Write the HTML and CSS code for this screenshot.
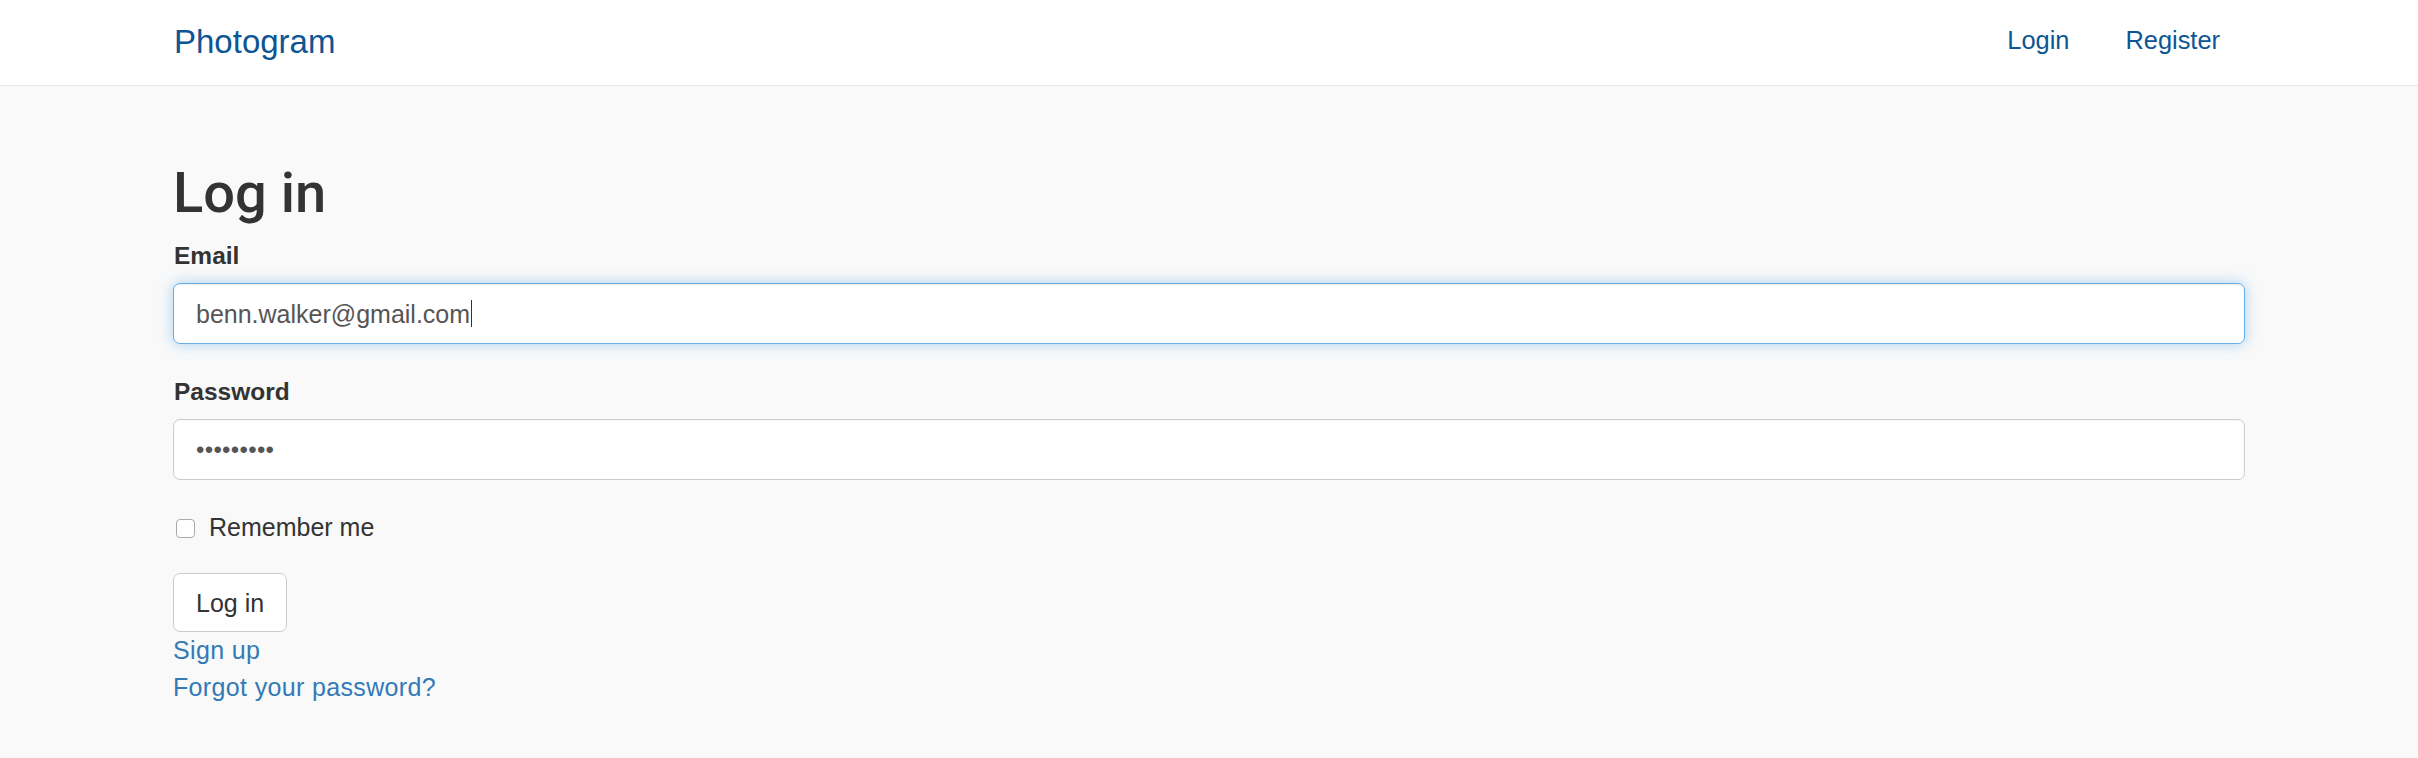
FILE: index.html
```html
<!DOCTYPE html>
<html lang="en">
<head>
<meta charset="utf-8">
<title>Photogram</title>
<link rel="stylesheet" href="styles.css">
</head>
<body>
<header class="navbar">
  <div class="container navbar-inner">
    <a class="brand" href="#">Photogram</a>
    <nav class="nav">
      <a href="#">Login</a>
      <a href="#">Register</a>
    </nav>
  </div>
</header>
<main class="container main">
  <h2 class="title">Log in</h2>
  <form class="form">
    <div class="form-group">
      <label class="label" for="email">Email</label>
      <div class="input focus"><span class="value">benn.walker@gmail.com</span><span class="caret"></span></div>
    </div>
    <div class="form-group">
      <label class="label" for="pw">Password</label>
      <div class="input"><span class="dots">•••••••••</span></div>
    </div>
    <div class="checkbox">
      <span class="box"></span>
      <span>Remember me</span>
    </div>
    <button type="button" class="btn">Log in</button>
  </form>
  <div class="links">
    <a href="#">Sign up</a>
    <a href="#">Forgot your password?</a>
  </div>
</main>
</body>
</html>
```
FILE: styles.css
```css
* { box-sizing: border-box; }
html, body { margin: 0; padding: 0; }
body {
  background: #f9f9f9;
  font-family: "Liberation Sans", Arial, Helvetica, sans-serif;
  font-size: 25px;
  line-height: 36px;
  color: #333;
}
a { text-decoration: none; }
.container {
  width: 2072px;
  margin: 0 auto;
}
.navbar {
  background: #fff;
  border-bottom: 1px solid #e7e7e7;
  height: 86px;
}
.navbar-inner {
  display: flex;
  justify-content: space-between;
  align-items: flex-start;
}
.brand {
  color: #0d5593;
  font-size: 33px;
  line-height: 36px;
  margin-top: 24px;
  padding-left: 1px;
}
.nav {
  display: flex;
  gap: 56px;
  margin-top: 22px;
  padding-right: 25px;
}
.nav a {
  color: #0d5593;
  font-size: 25.4px;
  line-height: 36px;
}
.main {
  padding-top: 78px;
}
.title {
  font-family: Roboto, "Liberation Sans", Arial, sans-serif;
  font-size: 56px;
  line-height: 59px;
  font-weight: 500;
  margin: 0 0 15px;
  color: #333;
}
.form-group {
  margin-bottom: 30px;
}
.label {
  display: block;
  font-weight: bold;
  font-size: 24.5px;
  line-height: 36px;
  margin-bottom: 9px;
  padding-left: 1px;
}
.input {
  height: 61px;
  background: #fff;
  border: 1px solid #ccc;
  border-radius: 7px;
  padding: 11px 22px;
  color: #555;
  font-size: 25px;
  line-height: 36px;
  display: flex;
  align-items: center;
  box-shadow: inset 0 1px 2px rgba(0,0,0,.04);
}
.input.focus {
  border-color: #66afe9;
  box-shadow: inset 0 1px 1px rgba(0,0,0,.075), 0 0 14px rgba(102,175,233,.55);
}
.caret {
  display: inline-block;
  width: 1px;
  height: 27px;
  background: #333;
  margin-left: 1px;
}
.dots {
  font-size: 24px;
  letter-spacing: 0.3px;
  color: #555;
}
.checkbox {
  display: flex;
  align-items: center;
  gap: 14px;
  margin: -1px 0 28px 3px;
  height: 36px;
}
.box {
  width: 19px;
  height: 19px;
  border: 1px solid #a9a9a9;
  border-radius: 4px;
  background: #fff;
  margin-top: 3px;
}
.btn {
  display: block;
  height: 59px;
  padding: 10px 22px;
  font-family: inherit;
  font-size: 25px;
  line-height: 36px;
  color: #333;
  background: #fff;
  border: 1px solid #ccc;
  border-radius: 7px;
}
.links {
  display: flex;
  flex-direction: column;
  align-items: flex-start;
}
.links a {
  color: #337ab7;
  font-size: 25px;
  line-height: 37px;
  letter-spacing: 0.35px;
}
```
